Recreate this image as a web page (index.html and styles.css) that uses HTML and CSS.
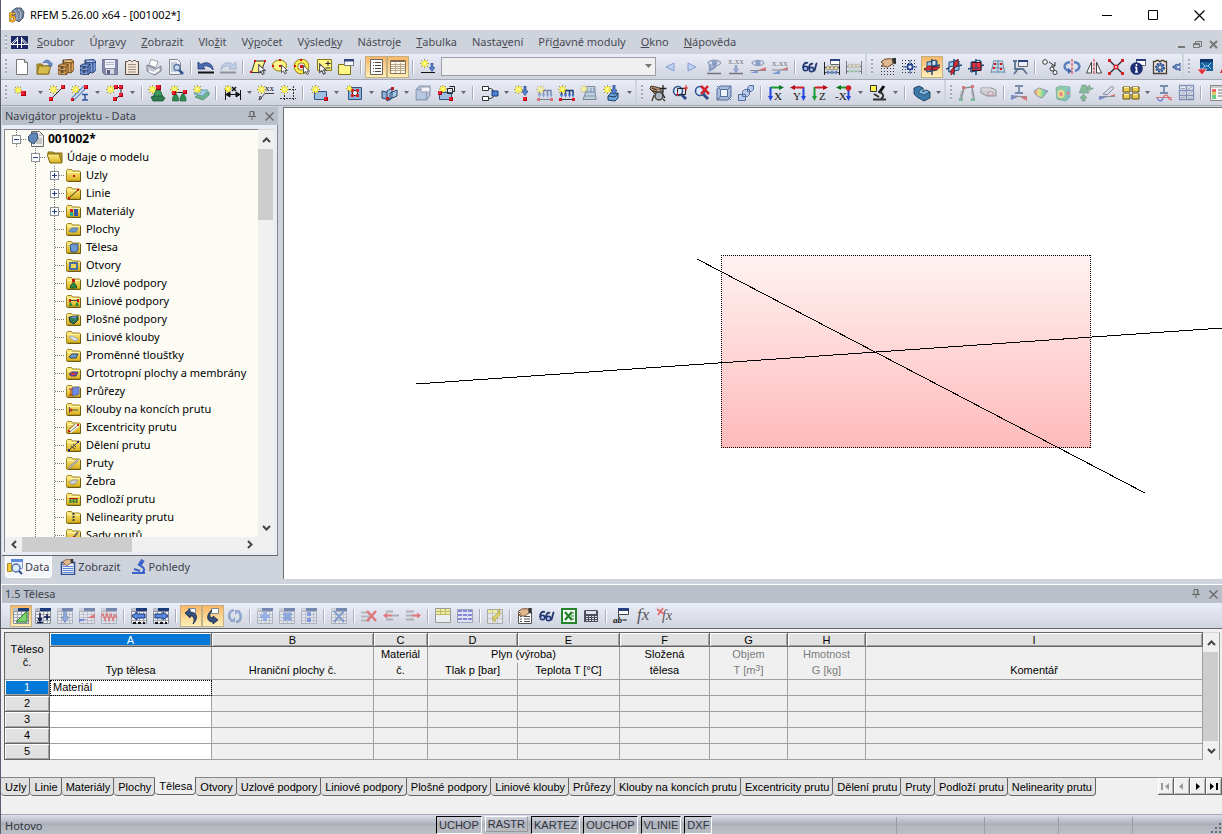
FILE: index.html
```html
<!DOCTYPE html>
<html lang="cs">
<head>
<meta charset="utf-8">
<title>RFEM 5.26.00 x64 - [001002*]</title>
<link rel="stylesheet" href="styles.css">
</head>
<body>
<svg class="defs" aria-hidden="true">
  <defs>
    <linearGradient id="pink" x1="0" y1="0" x2="0" y2="1"><stop offset="0" stop-color="#fff2f2"/><stop offset="1" stop-color="#ffbaba"/></linearGradient>
    <linearGradient id="gold" x1="0" y1="0" x2="0" y2="1"><stop offset="0" stop-color="#fff08a"/><stop offset="1" stop-color="#d8ae18"/></linearGradient>
    <linearGradient id="rain" x1="0" y1="0" x2="1" y2="0"><stop offset="0" stop-color="#e33"/><stop offset=".35" stop-color="#ee3"/><stop offset=".65" stop-color="#3c6"/><stop offset="1" stop-color="#36d"/></linearGradient>
    <symbol id="star" viewBox="0 0 8 8"><path d="M4 0v8M0 4h8M1 1l6 6M7 1L1 7" stroke="#8c7c20" stroke-width=".8"/><path d="M4 1v6M1 4h6M2 2l4 4M6 2L2 6" stroke="#f8ec20" stroke-width="1.300"/><circle cx="4" cy="4" r="1.500" fill="#fffb90"/></symbol>
    <symbol id="node" viewBox="0 0 4 4"><path d="M0 0h4v4H0z" fill="#b00010"/><path d="M0 0h3v3H0z" fill="#f02030"/></symbol>
    <symbol id="folder" viewBox="0 0 15 13"><path d="M.5 2.500v-1l1-1h4l1 1.500h7l1 1v9h-14z" fill="url(#gold)" stroke="#a08420"/><path d="M1.500 3.500h12" stroke="#fff6b0"/><path d="M14.500 3.500v9h-13" fill="none" stroke="#6e5a10"/></symbol>
    <symbol id="grid" viewBox="0 0 16 16"><path d="M.5 3.500h15v12H.5z" fill="#eceef2" stroke="#8a8e98"/><path d="M1 6.500h14M1 9.500h14M1 12.500h14M4.500 4v11M8.500 4v11M12.500 4v11" stroke="#a4a8b2"/><path d="M0 0h16v3H0z" fill="#b9bdc6"/><path d="M5 0h11v3H5z" fill="#1b3a7a"/></symbol>
    <symbol id="cursor" viewBox="0 0 7 10"><path d="M.5.5v7.500l2-1.500 1.500 3 1.500-1-1.500-2.500h2.500z" fill="#fff" stroke="#555"/></symbol>
    <symbol id="down" viewBox="0 0 6 10"><path d="M2 0h2v5h2l-3 4.500L0 5h2z" fill="#5b88dc" stroke="#1c3a7c" stroke-width=".7"/></symbol>
    <symbol id="dots" viewBox="0 0 16 16"><path d="M1 1.500h15M1 4.500h15M1 7.500h15M1 10.500h15M1 13.500h15" stroke="#333" stroke-width="1" stroke-dasharray="1 2"/></symbol>
    <symbol id="glasses" viewBox="0 0 16 16"><path d="M1 9c0-4 2-6 5-5M6 9h2M7 9c0-3 2-5 4-4M12 12c2-2 1-6 3-8" fill="none" stroke="#24386f" stroke-width="1.800"/><circle cx="3.500" cy="9.500" r="2.300" fill="#a9bdec" stroke="#24386f" stroke-width="1.500"/><circle cx="9.500" cy="10.500" r="2.300" fill="#a9bdec" stroke="#24386f" stroke-width="1.500"/></symbol>
    <symbol id="blades" viewBox="0 0 16 16"><path d="M3 3l10-1v9L3 13z" fill="#9cc8ee" stroke="#1d4474"/><path d="M8 0v16M0 10l16-4" stroke="#1d4474" stroke-width="1.500"/><path d="M8 2l4-1v5l-4 1zM3 8l5-1v4l-5 2z" fill="#d6ebfa" stroke="#1d4474"/></symbol>
    <symbol id="frame" viewBox="0 0 16 16"><path d="M1 14.500h14" stroke="#333"/><path d="M2.500 5.500h12M2.500 5v6M6.500 5v6M10.500 5v6M14 5v6" stroke="#1c3a7c" stroke-width="1.500"/><path d="M1 9h3l-1.500 4zM5 9h3l-1.500 4zM9 9h3l-1.500 4zM12.500 9h3L14 13z" fill="#4a78d0"/><path d="M0 13h3v3H0zM13 13h3v3h-3z" fill="#e01828"/></symbol>
    <symbol id="vis" viewBox="0 0 16 8"><path d="M1 4c3-4 11-4 14 0-3 4-11 4-14 0z" fill="#e4ecf8" stroke="#54688c" stroke-width="1.300"/><circle cx="8" cy="4" r="3" fill="#4568a8"/></symbol>
    <symbol id="hand" viewBox="0 0 12 8"><path d="M0 3l3-2 4-.5 3 1v3l-2 1-3 2-2-1H0l2-1.500z" fill="#e0b890" stroke="#6e4524" stroke-width=".8"/><path d="M9 0h3v5l-3-1z" fill="#333"/></symbol>
    <symbol id="lens" viewBox="0 0 16 16"><path d="M9 9l5 5" stroke="#2c4a8c" stroke-width="3"/><circle cx="6" cy="6" r="4.500" fill="#d4e6fa" stroke="#33508c" stroke-width="1.500"/></symbol>
    <symbol id="cube" viewBox="0 0 14 14"><path d="M1 4l3-3h9v8l-3 4H1z" fill="#9db8dc" stroke="#4d6488"/><path d="M1 4h9v9M10 4l3-3" fill="none" stroke="#4d6488"/></symbol>
    <symbol id="caret" viewBox="0 0 5 3"><path d="M0 0h5L2.500 3z" fill="#666"/></symbol>
    <symbol id="pin" viewBox="0 0 8 10"><path d="M2 .5h4v5H2zM5.500 1v4M0 5.500h8M4 6v3" fill="none" stroke="#666"/></symbol>
    <symbol id="cross" viewBox="0 0 9 9"><path d="M.5.5l8 8M8.500.5l-8 8" stroke="#666" stroke-width="1.300"/></symbol>
    <symbol id="cabinet" viewBox="0 0 16 16"><path d="M5 1l9-.5L16 3v8l-3 3-5-1z" stroke-width=".8"/><path d="M0 7l3-2h7v9l-2 2-8-1z" stroke-width=".8"/><path d="M5 1v4M0 7l8 1v8M8 8l2-3M0 11l8 1M13 4v9M13 4l3-1M6 3l7 1" fill="none" stroke-width=".8"/><path d="M2.500 9h3M2.500 13h3" stroke="#333" stroke-width="1.500"/><path d="M6 2l6 .5" stroke="#fff" opacity=".6"/></symbol>
  </defs>
</svg>

<header class="titlebar">
  <svg class="ic" viewBox="0 0 16 16"><path d="M3 4l4-3 5 0 3 4-1 6-4 4-3-2-4-3z" fill="#71849c" stroke="#44566e"/><path d="M5 3l3 4v6M9 2l3 4-1 6M3 5l3 3" fill="none" stroke="#b8c6d6"/><text x="0" y="15" class="five">5</text></svg>
  <h1>RFEM 5.26.00 x64 - [001002*]</h1>
  <div class="winbtns">
    <button aria-label="Minimalizovat"><svg width="11" height="11"><path d="M0 5.500h10" stroke="#000"/></svg></button>
    <button aria-label="Maximalizovat"><svg width="11" height="11"><path d="M.5.5h9v9h-9z" fill="none" stroke="#000"/></svg></button>
    <button aria-label="Zavřít"><svg width="11" height="11"><path d="M.5.5l10 10M10.500.5l-10 10" stroke="#000" stroke-width="1.200"/></svg></button>
  </div>
</header>

<nav class="menubar">
  <span class="grip"></span>
  <svg class="logo" viewBox="0 0 17 13"><path d="M0 0h17v13H0z" fill="#1c2765"/><path d="M0 8.500h17M6.500 1v11M10.500 1v11M6.500 2L0 8M10.500 2l6 6M6 4L2 8M11 4l3 4" stroke="#fff" fill="none"/></svg>
  <div class="menus">
    <button><u>S</u>oubor</button><button>Úpr<u>a</u>vy</button><button><u>Z</u>obrazit</button><button>Vlo<u>ž</u>it</button><button>Vý<u>p</u>očet</button><button>Výsled<u>k</u>y</button><button>Nástro<u>j</u>e</button><button><u>T</u>abulka</button><button>Nasta<u>v</u>ení</button><button>Pří<u>d</u>avné moduly</button><button><u>O</u>kno</button><button><u>N</u>ápověda</button>
  </div>
  <div class="mdi">
    <button aria-label="Minimalizovat okno"><svg width="9" height="9"><path d="M1 7h7" stroke="#777" stroke-width="2"/></svg></button>
    <button aria-label="Obnovit okno"><svg width="9" height="9"><path d="M2.500 3V1.500h6v5H7M.5 3.500h6v4h-6zM.5 4.500h6" fill="none" stroke="#777"/></svg></button>
    <button aria-label="Zavřít okno"><svg width="9" height="9"><path d="M1 1l7 7M8 1L1 8" stroke="#777" stroke-width="2"/></svg></button>
  </div>
</nav>

<div class="toolrow">
  <div class="bar" role="toolbar">
    <span class="grip"></span>
    <button class="tb" aria-label="Nový"><svg viewBox="0 0 16 16"><path d="M2.500.5h8l3 3v12h-11z" fill="#fff" stroke="#777"/><path d="M10.500.5v3h3" fill="#ddd" stroke="#777"/></svg></button>
    <button class="tb" aria-label="Otevřít"><svg viewBox="0 0 16 16"><path d="M1 15V5h5l1 2h6v8z" fill="#b79a30" stroke="#8a7220"/><path d="M1 15l2-8h12l-3 8z" fill="#d8bc4c" stroke="#8a7220"/><path d="M7 4c2-4 6-4 8 0l1 0v3h-4l1-1.500C12 3 9 3 7 4z" fill="#6c8ec8" stroke="#3c5a92" stroke-width=".6"/></svg></button>
    <button class="tb" aria-label="Projekty"><svg viewBox="0 0 16 16"><use href="#cabinet" fill="#d9a45c" stroke="#54330c"/></svg></button>
    <button class="tb" aria-label="Bloky"><svg viewBox="0 0 16 16"><use href="#cabinet" fill="#7f9fe0" stroke="#16295c"/></svg></button>
    <button class="tb" aria-label="Uložit"><svg viewBox="0 0 16 16"><path d="M.5.5h15v15h-13l-2-2z" fill="#8486a8" stroke="#777a98"/><path d="M3 1h10v8H3z" fill="#f0f0f8"/><path d="M4 3.500h8M4 5.500h8" stroke="#b4b6c8"/><path d="M4 10h8v5H4z" fill="#d8d8e2"/><path d="M5 11h3v4H5z" fill="#5c5f84"/></svg></button>
    <button class="tb" aria-label="Protokol"><svg viewBox="0 0 16 16"><path d="M1.500 2.500h2l1-1h2l1 1h1l1-1h2l1 1h2v13h-13z" fill="#f0e6da" stroke="#54483e"/><path d="M4 5.500h8M4 8h8M4 10.500h8M4 13h8" stroke="#a08e80"/></svg></button>
    <button class="tb" aria-label="Tisk"><svg viewBox="0 0 16 16"><path d="M3 6l2-5.500 7 2-2 6z" fill="#fff" stroke="#888" stroke-width=".8"/><path d="M1 6l9 4 5-3v5l-6 4-8-4z" fill="#c4c6d2" stroke="#66687a" stroke-width=".8"/><path d="M3 12l5 2 5-4" fill="none" stroke="#fff" stroke-width="1.800"/></svg></button>
    <button class="tb" aria-label="Náhled"><svg viewBox="0 0 16 16"><path d="M1.500.5h8l3 3v12h-11z" fill="#eef2f8" stroke="#888"/><path d="M3 4h6M3 6h5M3 8h4M3 10h3M3 12h5" stroke="#9ab"/><path d="M11 11l4 4" stroke="#34568e" stroke-width="2.500"/><circle cx="9" cy="8.500" r="3" fill="#c4dcf4" stroke="#5c75a4" stroke-width="1.300"/></svg></button>
    <i class="sep"></i>
    <button class="tb" aria-label="Zpět"><svg viewBox="0 0 16 16"><path d="M0 13.500h16" stroke="#111" stroke-width="2"/><path d="M0 3v7h7L5 7.500C8 6 12 7 15 11c0-7-7-9-12-5.500z" fill="#4a70b8" stroke="#1c3468" stroke-width=".8"/></svg></button>
    <button class="tb dis" aria-label="Znovu"><svg viewBox="0 0 16 16"><path d="M0 13.500h16" stroke="#555" stroke-width="2"/><path d="M16 3v7H9l2-2.500C8 6 4 7 1 11c0-7 7-9 12-5.500z" fill="#a9c1e8" stroke="#6c7fa3" stroke-width=".8"/></svg></button>
    <i class="sep"></i>
    <button class="tb" aria-label="Výběr kosodélníkem"><svg viewBox="0 0 16 16"><path d="M1.500 13.500L5 2h10l-4 11.500z" fill="#fff68a" stroke="#333"/><path d="M4 1h2v2H4zM14 1h2v2h-2zM0 12h2v2H0z" fill="#d11"/><use href="#cursor" x="8" y="5" width="8" height="11"/></svg></button>
    <button class="tb" aria-label="Výběr elipsou"><svg viewBox="0 0 16 16"><ellipse cx="7.500" cy="6.500" rx="7" ry="5.500" fill="#fff68a" stroke="#887a00"/><path d="M7 6h2v2H7zM7 0h2v2H7zM0 6h2v2H0z" fill="#d11"/><use href="#cursor" x="9" y="5" width="7" height="11"/></svg></button>
    <button class="tb" aria-label="Výběr mezikružím"><svg viewBox="0 0 16 16"><circle cx="7.500" cy="7.500" r="5.500" fill="#e4e7f1" stroke="#807000" stroke-width="4.500"/><circle cx="7.500" cy="7.500" r="5.500" fill="none" stroke="#fff050" stroke-width="3"/><path d="M6 6h3v3H6zM6 0h2v2H6zM0 6h2v2H0z" fill="#d11"/><use href="#cursor" x="9" y="6" width="7" height="10"/></svg></button>
    <button class="tb" aria-label="Výběr oknem"><svg viewBox="0 0 16 16"><path d="M1.500.5h14v11h-14z" fill="#fff68a" stroke="#8a7b10"/><path d="M12 2v5M9.500 4.500h5M9.500 9h5" stroke="#222"/><use href="#cursor" x="3" y="4" width="8" height="12"/></svg></button>
    <button class="tb" aria-label="Výběr"><svg viewBox="0 0 16 16"><path d="M.5 5.500h12v10H.5z" fill="#fff68a" stroke="#7d7218"/><path d="M6.500.5h9v6h-9z" fill="#f8f8fc" stroke="#777"/><path d="M6 0h10v2.500H6z" fill="#33457c"/></svg></button>
    <i class="sep"></i>
    <button class="tb on" aria-label="Navigátor" aria-pressed="true"><svg viewBox="0 0 16 16"><path d="M2.500.5h12v15h-12z" fill="#fff" stroke="#666"/><path d="M5 3.500h1M5 6.500h1M5 9.500h1M5 12.500h1M7 3.500h6M7 6.500h6M7 9.500h6M7 12.500h6" stroke="#444"/></svg></button>
    <button class="tb on" aria-label="Tabulka" aria-pressed="true"><svg viewBox="0 0 16 16"><path d="M.5 1.500h15v13H.5z" fill="#fff8e8" stroke="#86745c"/><path d="M1 1h14v2H1z" fill="#80684c"/><path d="M1 5.500h14M1 7.500h14M1 9.500h14M1 11.500h14M5.500 4v10M10.500 4v10" stroke="#b8a68c"/></svg></button>
    <i class="sep"></i>
    <button class="tb" aria-label="Nový zatěžovací stav"><svg viewBox="0 0 16 16"><use href="#star" x="0" y="0" width="9" height="9"/><path d="M1 13.500h14" stroke="#111"/><use href="#down" x="9" y="4" width="6" height="9"/></svg></button>
    <label class="combo"><select aria-label="Zatěžovací stav"><option></option></select><svg class="car" width="7" height="4"><path d="M0 0h7L3.500 4z" fill="#777"/></svg></label>
    <button class="tb dis" aria-label="Předchozí"><svg viewBox="0 0 16 16"><path d="M12 4v8L4 8z" fill="#a9c3f4" stroke="#3f67bb"/></svg></button>
    <button class="tb dis" aria-label="Další"><svg viewBox="0 0 16 16"><path d="M4 4v8l8-4z" fill="#a9c3f4" stroke="#3f67bb"/></svg></button>
    <button class="tb dis" aria-label="Zobrazit zatížení"><svg viewBox="0 0 16 16"><use href="#vis" x="1" y="0" width="15" height="8"/><path d="M4 5v6c3-2 5-2 6-5" stroke="#4a68a8" stroke-width="2.500" fill="none"/><path d="M1 14.500h14" stroke="#222" stroke-width="1.500"/></svg></button>
    <button class="tb dis" aria-label="Hodnoty zatížení"><svg viewBox="0 0 16 16"><text x="0" y="5" class="xx">x.xx</text><use href="#down" x="5" y="6" width="6" height="8"/><path d="M1 14.500h14" stroke="#222" stroke-width="1.500"/></svg></button>
    <button class="tb dis" aria-label="Zobrazit výsledky"><svg viewBox="0 0 16 16"><use href="#vis" x="1" y="0" width="14" height="8"/><path d="M0 14l8-3v3z" fill="#36c"/><path d="M8 11l8-3v3z" fill="#d22"/><path d="M0 11.500h16" stroke="#444"/></svg></button>
    <button class="tb dis" aria-label="Hodnoty výsledků"><svg viewBox="0 0 16 16"><text x="0" y="7" class="xx">x.xx</text><path d="M0 15l8-4v4z" fill="#36c"/><path d="M8 11l8-3v3z" fill="#d22"/><path d="M0 11h16" stroke="#444"/></svg></button>
    <i class="sep"></i>
    <button class="tb" aria-label="Hledat"><svg viewBox="0 0 16 16"><use href="#glasses"/></svg></button>
    <button class="tb" aria-label="Číslování"><svg viewBox="0 0 16 16"><path d="M.5 3v13M15.500 3v13M0 8.500h16M0 13.500h16" stroke="#222"/><circle cx="4" cy="9" r="2" fill="#e8dca0" stroke="#777" stroke-width=".7"/><circle cx="8" cy="9" r="2" fill="#e8dca0" stroke="#777" stroke-width=".7"/><circle cx="12" cy="9" r="2" fill="#e8dca0" stroke="#777" stroke-width=".7"/><circle cx="4" cy="13.500" r="1.800" fill="#6d86bd"/><circle cx="8" cy="13.500" r="1.800" fill="#6d86bd"/><circle cx="12" cy="13.500" r="1.800" fill="#6d86bd"/><path d="M6.500.5h9v5h-9z" fill="#fff" stroke="#666"/><path d="M6 0h10v2H6z" fill="#29407c"/></svg></button>
    <button class="tb dis" aria-label="Přečíslovat"><svg viewBox="0 0 16 16"><path d="M.5 2v13M15.500 2v13M0 7.500h16M0 12.500h16" stroke="#222"/><circle cx="4" cy="7" r="2" fill="#e8dca0" stroke="#777" stroke-width=".7"/><circle cx="8" cy="7" r="2" fill="#e8dca0" stroke="#777" stroke-width=".7"/><circle cx="12" cy="7" r="2" fill="#e8dca0" stroke="#777" stroke-width=".7"/><circle cx="4" cy="12" r="1.800" fill="#8ac09a"/><circle cx="8" cy="12" r="1.800" fill="#8ac09a"/><circle cx="12" cy="12" r="1.800" fill="#8ac09a"/></svg></button>
  </div>
  <div class="bar" role="toolbar">
    <span class="grip"></span>
    <button class="tb" aria-label="Nastavit rastr"><svg viewBox="0 0 16 16"><use href="#dots" y="2"/><use href="#hand" x="1" y="-1" width="15" height="10"/></svg></button>
    <button class="tb" aria-label="Rastr"><svg viewBox="0 0 16 16"><use href="#dots" x="-1"/><path d="M8 1v14M1 8h14M5 5l6 6M11 5l-6 6" stroke="#3058b0"/><circle cx="8" cy="8" r="2.500" fill="#e8ecf8" stroke="#203c88" stroke-width="1.500"/></svg></button>
    <button class="tb on" aria-label="Rovina XY" aria-pressed="true"><svg viewBox="0 0 16 16"><use href="#blades"/><path d="M0 11l4-4h4l-1 4zM8 11l1-3h7l-4 3z" fill="#d8303a" stroke="#701018" stroke-width=".8"/></svg></button>
    <button class="tb" aria-label="Rovina YZ"><svg viewBox="0 0 16 16"><use href="#blades"/><path d="M8 4l4-4v6l-4 3zM5 11l3-3v5l-3 3z" fill="#d8303a" stroke="#701018" stroke-width=".8"/></svg></button>
    <button class="tb" aria-label="Rovina XZ"><svg viewBox="0 0 16 16"><use href="#blades"/><path d="M4 3.500h9v8H4z" fill="#f0303a" stroke="#401018"/><path d="M8 3v9M4 9h9" stroke="#1d4474"/></svg></button>
    <button class="tb" aria-label="Mřížka"><svg viewBox="0 0 16 16"><path d="M4 1h8l3 14H2z" fill="#c8d8e8"/><path d="M4 1l-3 13M8 1v13M12 1l3 13M3 5h10M2 9h12M1 13h14M5 2h6" stroke="#6f8fa8" fill="none"/><path d="M4 4h2v2H4zM10 4h2v2h-2zM3 8h2v2H3zM10 9h2v2h-2z" fill="#d11"/></svg></button>
    <button class="tb" aria-label="Pracovní rovina"><svg viewBox="0 0 16 16"><path d="M3 2v9M1 2h4M2 15l4-5h5l4 5M3 10h7" fill="none" stroke="#5c7490" stroke-width="1.800"/><path d="M6.500 1.500h9v6h-9z" fill="#e8eefb" stroke="#666"/><path d="M6 1h10v2H6z" fill="#29407c"/></svg></button>
    <i class="sep"></i>
    <button class="tb" aria-label="Posunout"><svg viewBox="0 0 16 16"><circle cx="3" cy="3" r="2.300" fill="#fff" stroke="#333"/><circle cx="10" cy="10" r="2" fill="#fff" stroke="#333"/><circle cx="13" cy="13.500" r="2" fill="#fff" stroke="#333"/><path d="M7 3l6 4M13 3v4H9" fill="none" stroke="#333"/></svg></button>
    <button class="tb" aria-label="Otočit"><svg viewBox="0 0 16 16"><path d="M6 3C-1 4-1 10 5 12M10 3c7 1 7 7 1 9" fill="none" stroke="#5c80c0" stroke-width="2.500"/><path d="M4 9l4 3-4 3z" fill="#3c60a8"/><path d="M8 0v16" stroke="#d22" stroke-dasharray="3 1"/></svg></button>
    <button class="tb" aria-label="Zrcadlit"><svg viewBox="0 0 16 16"><path d="M5.500 3v11H.5zM10.500 3v11h5z" fill="#fff" stroke="#444"/><path d="M8 0v16" stroke="#d22" stroke-dasharray="3 1"/></svg></button>
    <button class="tb" aria-label="Spojit"><svg viewBox="0 0 16 16"><path d="M2 2l12 12M14 2L2 14" stroke="#222" stroke-width="1.300"/><path d="M0 0h3v3H0zM13 0h3v3h-3zM0 13h3v3H0zM13 13h3v3h-3z" fill="#d8202a"/><circle cx="8" cy="8" r="2.500" fill="#d8202a"/><circle cx="8" cy="8" r="1" fill="#eee"/></svg></button>
    <button class="tb" aria-label="Informace"><svg viewBox="0 0 16 16"><path d="M6.500.5h9v6h-9z" fill="#fff" stroke="#666"/><path d="M6 0h10v2H6z" fill="#29407c"/><circle cx="6.500" cy="9.500" r="6.300" fill="#1c2f74"/><path d="M6.500 5v2M6.500 8v5M5 8.500h2M5 13h3" stroke="#fff" stroke-width="1.600"/></svg></button>
    <button class="tb" aria-label="Nastavení"><svg viewBox="0 0 16 16"><path d="M1.500 2.500h2l1-1h2l1 1h1l1-1h2l1 1h2v12h-13z" fill="#f0e8dc" stroke="#4a4038" stroke-width="1.300"/><circle cx="8" cy="8.500" r="4" fill="#7c98cc" stroke="#2d4c8c" stroke-width="2" stroke-dasharray="2 1"/><circle cx="8" cy="8.500" r="2" fill="#f0e8dc" stroke="#2d4c8c"/></svg></button>
    <button class="tb half" aria-label="Možnosti"><svg viewBox="0 0 8 16"><path d="M0 7h2l1-2 2 1 2-2v8l-2-2-2 1-1-2H0z" fill="#6c8cc8" stroke="#2d4c8c" stroke-width=".8"/><circle cx="5.500" cy="8" r="1.200" fill="#eef"/></svg></button>
  </div>
  <div class="bar last" role="toolbar">
    <span class="grip"></span>
    <button class="tb" aria-label="Moduly"><svg viewBox="0 0 16 16"><path d="M3 0h13v12H3z" fill="#1d5f9c"/><path d="M3 0h13v3H3z" fill="#10386c"/><path d="M5 4l3 3-3 3M14 4l-3 3 3 3M8 7h3" stroke="#88d0f4" fill="none"/><path d="M0 10h10l-5 6z" fill="#e0343c" stroke="#fff" stroke-width=".6"/></svg></button>
    <button class="tb" aria-label="Modul"><svg viewBox="0 0 16 16"><path d="M1 14l4-8v8z" fill="#d22"/></svg></button>
  </div>
</div>

<div class="toolrow">
  <div class="bar" role="toolbar">
    <span class="grip"></span>
    <button class="split" aria-label="Uzel"><svg viewBox="0 0 16 16"><use href="#star" x="-2" y="1" width="8" height="8"/><use href="#node" x="5" y="6" width="5" height="5"/></svg><svg class="dd"><use href="#caret"/></svg></button>
    <button class="tb" aria-label="Linie"><svg viewBox="0 0 16 16"><path d="M2 14L14 2" stroke="#222"/><use href="#star" x="0" y="0" width="9" height="9"/><use href="#node" x="0" y="12" width="4" height="4"/><use href="#node" x="12" y="0" width="4" height="4"/></svg></button>
    <button class="split" aria-label="Prut"><svg viewBox="0 0 16 16"><path d="M0 14L12 2" stroke="#5d7fb4" stroke-width="4"/><path d="M0 14L12 2" stroke="#c8dcf4" stroke-width="2"/><use href="#node" x="-2" y="13" width="3" height="3"/><use href="#node" x="11" y="0" width="4" height="4"/><use href="#star" x="-2" y="0" width="9" height="9"/><path d="M9 9.500h6M9 15h6M12 9v6" stroke="#2f55a4" stroke-width="1.500"/></svg><svg class="dd"><use href="#caret"/></svg></button>
    <button class="split" aria-label="Lomená linie"><svg viewBox="0 0 16 16"><path d="M6 2.500h7V9l-5 5" fill="none" stroke="#222"/><use href="#star" x="-2" y="0" width="9" height="9"/><use href="#node" x="6" y="0" width="4" height="4"/><use href="#node" x="11" y="0" width="4" height="4"/><use href="#node" x="11" y="8" width="4" height="4"/><use href="#node" x="5" y="12" width="4" height="4"/></svg><svg class="dd"><use href="#caret"/></svg></button>
    <i class="sep"></i>
    <button class="tb" aria-label="Uzlová podpora"><svg viewBox="0 0 16 16"><path d="M7 5h4l3 7H4z" fill="#3a9c5a" stroke="#1c5536" stroke-width=".8"/><path d="M2 12l3-1h8l3 2-2 3H4z" fill="#2c7c4c" stroke="#1c5536" stroke-width=".8"/><use href="#star" x="-1" y="0" width="9" height="9"/><use href="#node" x="7" y="0" width="5" height="5"/></svg></button>
    <button class="tb" aria-label="Liniová podpora"><svg viewBox="0 0 16 16"><path d="M2 7.500h12" stroke="#222"/><path d="M3.500 9h2l2 4v3h-6v-3zM11 9h2l2 4v3H9v-3z" fill="#2f8c50" stroke="#1c5536" stroke-width=".6"/><use href="#star" x="-1" y="0" width="9" height="9"/><use href="#node" x="1" y="6" width="4" height="4"/><use href="#node" x="12" y="5" width="4" height="4"/></svg></button>
    <button class="tb" aria-label="Plošná podpora"><svg viewBox="0 0 16 16"><path d="M2 12l3-2 11-3v3l-6 5z" fill="#6cb48c" stroke="#4a8a6c" stroke-width=".8"/><path d="M1 9l6-4h8l-5 6z" fill="#a4cce4" stroke="#5a96ac" stroke-width=".8"/><use href="#star" x="0" y="0" width="9" height="9"/></svg></button>
    <i class="sep"></i>
    <button class="split" aria-label="Kóta"><svg viewBox="0 0 16 16"><path d="M.5 5v10M15.500 5v10M1 9.500h14M1 9.500l4-2.500v5zM15 9.500l-4-2.500v5z" stroke="#111" fill="#111"/><use href="#star" x="-1" y="0" width="8" height="8"/><path d="M7 2l4 4M11 2L7 6" stroke="#111" stroke-width="1.500"/></svg><svg class="dd"><use href="#caret"/></svg></button>
    <button class="tb" aria-label="Komentář"><svg viewBox="0 0 16 16"><use href="#star" x="-1" y="0" width="9" height="9"/><text x="7" y="6" class="xx">xx</text><path d="M1 15l6-6.500h9M1 15l1-4 2 2z" stroke="#444" fill="none"/></svg></button>
    <button class="tb" aria-label="Vodicí linie"><svg viewBox="0 0 16 16"><path d="M4.500 1v15M13.500 1v15M0 4.500h16M0 13.500h16" stroke="#333" stroke-dasharray="2 1"/><use href="#star" x="0" y="0" width="9" height="9"/></svg></button>
    <i class="sep"></i>
    <button class="split" aria-label="Plocha"><svg viewBox="0 0 16 16"><path d="M2.500 6.500h12v8h-12z" fill="#9cc0e4" stroke="#34547f"/><use href="#star" x="-1" y="0" width="9" height="9"/><use href="#node" x="12" y="12" width="4" height="4"/></svg><svg class="dd"><use href="#caret"/></svg></button>
    <button class="split" aria-label="Otvor"><svg viewBox="0 0 16 16"><path d="M1.500 2.500h13v12h-13z" fill="#8eb1dc" stroke="#34547f"/><path d="M5.500 5.500h5v5h-5z" fill="#eef" stroke="#333"/><path d="M4 4h3v3H4zM9 4h3v3H9zM4 9h3v3H4zM9 9h3v3H9z" fill="#d22"/><path d="M6.500 6.500h3v3h-3z" fill="#eef"/><use href="#star" x="-1" y="0" width="7" height="7"/></svg><svg class="dd"><use href="#caret"/></svg></button>
    <button class="split" aria-label="Průnik"><svg viewBox="0 0 16 16"><path d="M0 6l8 2V15l-8-2z" fill="#8eb1dc" stroke="#2a426c"/><path d="M5 6l5-3v10l-5 3zM8 8l7-3v6l-7 3z" fill="#a8c8e8" stroke="#2a426c"/><path d="M4 12h3v3H4zM9 2h3v3H9z" fill="#b22"/></svg><svg class="dd"><use href="#caret"/></svg></button>
    <button class="tb dis" aria-label="Těleso"><svg viewBox="0 0 16 16"><use href="#cube" x="0" y="0" width="16" height="16"/><path d="M6 2h9v5H6z" fill="#fff" stroke="#667"/></svg></button>
    <button class="split" aria-label="Vysunutí"><svg viewBox="0 0 16 16"><path d="M.5 7.500h12v7H.5z" fill="#9ebce4" stroke="#34547f"/><path d="M8.500 3.500h5v5h-5zM10.500 1.500h5v5h-2" fill="none" stroke="#222"/><use href="#star" x="0" y="0" width="8" height="8"/><use href="#node" x="10" y="12" width="4" height="4"/><use href="#node" x="-1" y="6" width="4" height="4"/></svg><svg class="dd"><use href="#caret"/></svg></button>
    <i class="sep"></i>
    <button class="split" aria-label="Kloub"><svg viewBox="0 0 16 16"><path d="M.5 1.500h6v4h-6zM.5 11.500h6v4h-6z" fill="#fff" stroke="#333"/><path d="M7 3.500c4 0 5 2 5 4M7 13.500c4 0 5-2 5-4M10 5l2 3 2-2M10 11l2-2" fill="none" stroke="#333"/><path d="M10 6h6v5h-6z" fill="#4c85d8" stroke="#1d3d77"/></svg><svg class="dd"><use href="#caret"/></svg></button>
    <button class="tb" aria-label="Uzlové zatížení"><svg viewBox="0 0 16 16"><use href="#star" x="-1" y="0" width="9" height="9"/><use href="#down" x="7" y="1" width="6" height="10"/><use href="#node" x="8" y="12" width="4" height="4"/></svg></button>
    <button class="tb dis" aria-label="Zatížení prutu"><svg viewBox="0 0 16 16"><use href="#frame"/><use href="#star" x="-1" y="0" width="9" height="9"/></svg></button>
    <button class="tb" aria-label="Liniové zatížení"><svg viewBox="0 0 16 16"><use href="#frame"/><use href="#star" x="-1" y="0" width="9" height="9"/></svg></button>
    <button class="tb dis" aria-label="Plošné zatížení"><svg viewBox="0 0 16 16"><path d="M5 1.500h9v5l1 8H2l2-5z" fill="#a8c8dc" stroke="#345"/><path d="M5 7h9M3 11h11" stroke="#456"/><path d="M6 3v5M10 3v5M13 3v5" stroke="#2c4c8c"/><use href="#star" x="-1" y="0" width="8" height="8"/></svg></button>
    <button class="split" aria-label="Zatížení tělesa"><svg viewBox="0 0 16 16"><use href="#star" x="-2" y="0" width="9" height="9"/><path d="M3 11l3-3h7v5l-3 3-7-1z" fill="#6da6d8" stroke="#1d3d67"/><path d="M3 11l7 1 3-4" stroke="#1d3d67" fill="none"/><use href="#down" x="6" y="0" width="6" height="10"/></svg><svg class="dd"><use href="#caret"/></svg></button>
  </div>
  <div class="bar" role="toolbar">
    <span class="grip"></span>
    <button class="tb" aria-label="Posun pohledu"><svg viewBox="0 0 16 16"><path d="M1 1l5 1 4 1 2 4-2 2-5 0-5-5z" fill="#b09078" stroke="#4b3828"/><path d="M2 3l5 2M2 6l5 1M4 10l-2 6M13 14l2 2" stroke="#4b3828" stroke-width="1.300"/><circle cx="9" cy="11" r="4" fill="#aab4bc" stroke="#444" stroke-width="1.500"/><path d="M13 0v8M9.500 3.500h7M12 8l3 5" stroke="#222" stroke-width="1.300"/></svg></button>
    <button class="tb" aria-label="Zvětšit výřez"><svg viewBox="0 0 16 16"><use href="#lens"/><path d="M5.500 3.500h8v6h-8z" fill="none" stroke="#222"/><path d="M14 0v6M11 3h5M5.500 7v4M4 9.500h3" stroke="#d22"/></svg></button>
    <button class="tb" aria-label="Zrušit výběr"><svg viewBox="0 0 16 16"><use href="#lens"/><path d="M7 1l8 8M14 1L7 9" stroke="#d8202a" stroke-width="2.500"/></svg></button>
    <button class="tb" aria-label="Izometrie"><svg viewBox="0 0 16 16"><path d="M1 4l3-3h11v11l-3 3H1z" fill="#a8bcd8" stroke="#54709f"/><path d="M4.500 4.500h7v7h-7z" fill="#eef2fb" stroke="#54709f"/><path d="M1 1l3.500 3.500M15 1l-3.500 3.500M1 15l3.500-3.500M15 15l-3.500-3.500" stroke="#54709f"/></svg></button>
    <button class="tb" aria-label="Perspektiva"><svg viewBox="0 0 16 16"><path d="M9.500 2.500l2-2h4v4l-2 2h-4zM4.500 6.500l2-2h5v5l-2 2h-5zM.5 9.500h7v6h-7z" fill="#b7c9ec" stroke="#54709f"/></svg></button>
    <i class="sep"></i>
    <button class="tb" aria-label="Pohled X"><svg viewBox="0 0 16 16"><path d="M2.500 13V2" stroke="#2244dd" stroke-width="2"/><path d="M3 2.500h11" stroke="#1a9c30" stroke-width="2"/><path d="M11 0l5 2.500L11 5z" fill="#127a24"/><path d="M0 11h5l-2.500 5z" fill="#2244dd"/><text x="6" y="15" class="ax">X</text></svg></button>
    <button class="tb" aria-label="Pohled Y"><svg viewBox="0 0 16 16"><path d="M13.500 13V2" stroke="#2244dd" stroke-width="2"/><path d="M14 2.500H3" stroke="#d4202a" stroke-width="2"/><path d="M5 0L0 2.500 5 5z" fill="#b01018"/><path d="M11 11h5l-2.500 5z" fill="#2244dd"/><text x="3" y="15" class="ax">Y</text></svg></button>
    <button class="tb" aria-label="Pohled Z"><svg viewBox="0 0 16 16"><path d="M2.500 13V2" stroke="#1a9c30" stroke-width="2"/><path d="M3 2.500h11" stroke="#d4202a" stroke-width="2"/><path d="M11 0l5 2.500L11 5z" fill="#b01018"/><path d="M0 11h5l-2.500 5z" fill="#1a9c30"/><text x="7" y="15" class="ax">Z</text></svg></button>
    <button class="split" aria-label="Pohled -X"><svg viewBox="0 0 16 16"><path d="M12.500 13V2" stroke="#2244dd" stroke-width="2"/><path d="M13 2.500H3" stroke="#1a9c30" stroke-width="2"/><path d="M5 0L0 2.500 5 5z" fill="#127a24"/><circle cx="12.500" cy="3" r="2.800" fill="#d4202a"/><path d="M10 11h5l-2.500 5z" fill="#2244dd"/><text x="-1" y="15" class="ax">-X</text></svg><svg class="dd"><use href="#caret"/></svg></button>
    <button class="split" aria-label="Průhlednost"><svg viewBox="0 0 16 16"><path d="M-.5.5h6v6h-6z" fill="#fff650" stroke="#333"/><path d="M13 1L8 8" stroke="#111" stroke-width="3"/><path d="M9 7c4 2 4 5 1 7M3 9l5 3M2 14.500h13" stroke="#333" stroke-width="2" fill="none"/></svg><svg class="dd"><use href="#caret"/></svg></button>
    <i class="sep"></i>
    <button class="split" aria-label="Vykreslení"><svg viewBox="0 0 16 16"><path d="M0 3l5-2 4 2v4l3-2 4 2v6l-6 3-7-4-3-3z" fill="#3c78a8" stroke="#122c4c" stroke-width=".8"/><path d="M5 6l4-3v4l3-2 4 2-6 3-5-2z" fill="#7cb4dc" stroke="#122c4c" stroke-width=".6"/></svg><svg class="dd"><use href="#caret"/></svg></button>
  </div>
  <div class="bar last" role="toolbar">
    <span class="grip"></span>
    <button class="tb dis" aria-label="Deformace"><svg viewBox="0 0 16 16"><path d="M2 14L5 3l8-1 2 12" fill="none" stroke="#444" stroke-width="1.500"/><path d="M5 3c-4 4-4 7-3 11M13 3c-1 3 0 7 2 11" stroke="#888" fill="none"/><path d="M3 1h3v3H3zM12 0h3v3h-3z" fill="#c22"/><path d="M0 13h4v3H0zM12 13h4v3h-4z" fill="#396"/></svg></button>
    <button class="tb dis" aria-label="Barvy"><svg viewBox="0 0 16 16"><path d="M0 3h10l5 2v6H6L0 8z" fill="#c0c0c0" stroke="#555"/><path d="M0 4h9l5 2" stroke="#eee" fill="none"/><path d="M7 7h5v3H7z" fill="#eee" stroke="#a55"/></svg></button>
    <i class="sep"></i>
    <button class="tb dis" aria-label="Vnitřní síly"><svg viewBox="0 0 16 16"><path d="M4 1h8M4 8h8M8 1v7" stroke="#247" stroke-width="1.800"/><path d="M0 15v-5l9 1z" fill="#24c"/><path d="M9 12h7v4z" fill="#d22"/><path d="M0 11.500h16" stroke="#555"/></svg></button>
    <button class="tb dis" aria-label="Napětí ploch"><svg viewBox="0 0 16 16"><path d="M1 6l5-3 9 3-6 7c-4-1-7-3-8-7z" fill="url(#rain)" stroke="#557"/></svg></button>
    <button class="tb dis" aria-label="Napětí těles"><svg viewBox="0 0 16 16"><path d="M1 3l4-2 10 1v10l-4 4-9-2z" fill="#4cb86c" stroke="#276" stroke-width=".8"/><path d="M11 5l4-3v10l-4 4z" fill="#3aa0b0"/><ellipse cx="6" cy="9" rx="3.500" ry="4" fill="#f4e440"/><ellipse cx="6" cy="9" rx="1.700" ry="2.200" fill="#e33"/><circle cx="13" cy="8" r="1.500" fill="#e33"/></svg></button>
    <button class="tb dis" aria-label="Reakce"><svg viewBox="0 0 16 16"><path d="M5 0h4l2 6 1 2H2l1-2zM5 16v-3H3l3.500-4 3.500 4H8v3zM16 3h-3V0L9 3l4 3V4h3z" fill="#3a9c5a" stroke="#1c5536" stroke-width=".6"/></svg></button>
    <button class="tb dis" aria-label="Řezy"><svg viewBox="0 0 16 16"><path d="M4 9l9-8 2 2-7 7z" fill="#dde" stroke="#345"/><path d="M0 15v-3h8z" fill="#24c"/><path d="M8 12l8-3v3z" fill="#d22"/><path d="M0 11.500h16" stroke="#555"/></svg></button>
    <button class="split" aria-label="Okna výsledků"><svg viewBox="0 0 16 16"><path d="M0 2h7v5H0zM9 2h7v5H9zM0 9h7v5H0zM9 9h7v5H9z" fill="#e8cc50" stroke="#5c4a0c"/><path d="M1 2.500h5M10 2.500h5M1 9.500h5M10 9.500h5" stroke="#fff6b0"/></svg><svg class="dd"><use href="#caret"/></svg></button>
    <button class="tb dis" aria-label="Průběhy"><svg viewBox="0 0 16 16"><path d="M4 1h8M4 8h8M8 1v7" stroke="#247" stroke-width="1.800"/><path d="M0 12.500h16" stroke="#d22"/><path d="M1 13c2 4 5 4 6 0" stroke="#24c" fill="none" stroke-width="1.500"/><path d="M7 13c2-4 5-4 6 1l3 1" stroke="#d22" fill="none" stroke-width="1.500"/></svg></button>
    <button class="tb dis" aria-label="Tabulka výsledků"><svg viewBox="0 0 16 16"><path d="M1.500.5h14v14h-14zM8.500 1v14M1 5.500h14M1 10.500h14" fill="#e8eef8" stroke="#35508a" stroke-width="1.300"/><path d="M3 3.500h4M10 4l4-2M3 8h4M10 8.500l4-1M3 13l4-1M10 13h4" stroke="#777"/></svg></button>
    <i class="sep"></i>
    <button class="tb" aria-label="Panel"><svg viewBox="0 0 16 16"><path d="M2.500.5h13v15h-13z" fill="#f4f4f6" stroke="#888"/><path d="M3 1h12v2H3z" fill="#ccc"/><path d="M4 4h4v3H4z" fill="#e66"/><path d="M4 7h4v3H4z" fill="#dc6"/><path d="M4 10h4v4H4z" fill="#6c8"/><path d="M10 5h4M10 8h4M10 11h4" stroke="#777"/></svg></button>
  </div>
</div>

<main class="work">
  <aside class="dock">
    <div class="cap"><h2>Navigátor projektu - Data</h2><button aria-label="Připnout"><svg width="8" height="10"><use href="#pin"/></svg></button><button aria-label="Zavřít panel"><svg width="9" height="9"><use href="#cross"/></svg></button></div>
    <div class="treebox">
      <ul class="tree">
        <li><button class="exp" aria-label="Sbalit"></button><svg class="ic" viewBox="0 0 16 16"><path d="M3.500.5h8l4 4v11h-12z" fill="#f2f2f2" stroke="#666"/><path d="M8 8h6M8 10h6M8 12h6M11 4h4" stroke="#999"/><path d="M0 6l4-4h5l1 5-4 6-5-3z" fill="#6187b8" stroke="#33496c"/></svg><b>001002*</b></li>
        <li><i></i><button class="exp" aria-label="Sbalit"></button><svg class="ic" viewBox="0 0 16 16"><path d="M1 3h5l1 1h8v9H3z" fill="#c9a726" stroke="#7e6a18"/><path d="M0 5h12l3 9H3z" fill="url(#gold)" stroke="#7e6a18"/></svg>Údaje o modelu</li>
        <li><i></i><i class="v"></i><button class="exp plus" aria-label="Rozbalit"></button><svg class="ic" viewBox="0 0 16 16"><use href="#folder" y="2" width="15" height="13"/><path d="M7 8h2v2H7z" fill="#c11"/></svg>Uzly</li>
        <li><i></i><i class="v"></i><button class="exp plus" aria-label="Rozbalit"></button><svg class="ic" viewBox="0 0 16 16"><use href="#folder" y="2" width="15" height="13"/><path d="M3 13l9-8" stroke="#333"/><path d="M2 12h2v2H2zM11 4h2v2h-2z" fill="#c11"/></svg>Linie</li>
        <li><i></i><i class="v"></i><button class="exp plus" aria-label="Rozbalit"></button><svg class="ic" viewBox="0 0 16 16"><use href="#folder" y="2" width="15" height="13"/><path d="M4 6h3v3H4z" fill="#c22"/><path d="M4 9h3v4H4z" fill="#2a8"/><path d="M8 6h4v7H8z" fill="#35a"/></svg>Materiály</li>
        <li><i></i><i class="v"></i><i class="t"></i><svg class="ic" viewBox="0 0 16 16"><use href="#folder" y="2" width="15" height="13"/><path d="M3 10l3-3h6l-2 4H5z" fill="#6d98d4" stroke="#5a7ca8"/></svg>Plochy</li>
        <li><i></i><i class="v"></i><i class="t"></i><svg class="ic" viewBox="0 0 16 16"><use href="#folder" y="2" width="15" height="13"/><path d="M4 6l2-1h6v6l-2 2H5z" fill="#6d98d4" stroke="#34547f"/></svg>Tělesa</li>
        <li><i></i><i class="v"></i><i class="t"></i><svg class="ic" viewBox="0 0 16 16"><use href="#folder" y="2" width="15" height="13"/><path d="M4 6h7v6H4z" fill="#f2d456" stroke="#47709f" stroke-width="2"/></svg>Otvory</li>
        <li><i></i><i class="v"></i><i class="t"></i><svg class="ic" viewBox="0 0 16 16"><use href="#folder" y="2" width="15" height="13"/><path d="M7.500 7l3 4v2h-6v-2z" fill="#2f8c3e" stroke="#1c5526"/><path d="M6 4h3v3H6z" fill="#c11"/></svg>Uzlové podpory</li>
        <li><i></i><i class="v"></i><i class="t"></i><svg class="ic" viewBox="0 0 16 16"><use href="#folder" y="2" width="15" height="13"/><path d="M4 7.500h8" stroke="#444"/><path d="M3 6h2v3H3zM11 6h2v3h-2z" fill="#c11"/><path d="M4 8l3 5H3zM11 8l2 5H9z" fill="#2f8c3e"/></svg>Liniové podpory</li>
        <li><i></i><i class="v"></i><i class="t"></i><svg class="ic" viewBox="0 0 16 16"><use href="#folder" y="2" width="15" height="13"/><path d="M3 6l9-1v4l-4 4-4-2z" fill="#2f7c4e" stroke="#234"/><path d="M4 6l7-1-2 3z" fill="#6d98d4"/></svg>Plošné podpory</li>
        <li><i></i><i class="v"></i><i class="t"></i><svg class="ic" viewBox="0 0 16 16"><use href="#folder" y="2" width="15" height="13"/><path d="M3 8l3-1 6 3-2 2-3-1z" fill="#dde3ee" stroke="#aab"/></svg>Liniové klouby</li>
        <li><i></i><i class="v"></i><i class="t"></i><svg class="ic" viewBox="0 0 16 16"><use href="#folder" y="2" width="15" height="13"/><path d="M3 10l3-3h6l-2 4H5z" fill="#6d98d4" stroke="#346"/></svg>Proměnné tloušťky</li>
        <li><i></i><i class="v"></i><i class="t"></i><svg class="ic" viewBox="0 0 16 16"><use href="#folder" y="2" width="15" height="13"/><path d="M3 9l3-2h6l-2 4H5z" fill="#55a" stroke="#547"/><path d="M5 9h4" stroke="#d33" stroke-width="2"/></svg>Ortotropní plochy a membrány</li>
        <li><i></i><i class="v"></i><i class="t"></i><svg class="ic" viewBox="0 0 16 16"><use href="#folder" y="2" width="15" height="13"/><path d="M6 5l7-1v7l-6 2z" fill="#6d8ae0" stroke="#5474af"/><path d="M3 6h4M3 12h4M5 6v6" stroke="#a22"/></svg>Průřezy</li>
        <li><i></i><i class="v"></i><i class="t"></i><svg class="ic" viewBox="0 0 16 16"><use href="#folder" y="2" width="15" height="13"/><path d="M3.500 6v6M5 9h7" stroke="#555"/><circle cx="5" cy="9" r="1.500" fill="#c22"/></svg>Klouby na koncích prutu</li>
        <li><i></i><i class="v"></i><i class="t"></i><svg class="ic" viewBox="0 0 16 16"><use href="#folder" y="2" width="15" height="13"/><path d="M4 13l8-7" stroke="#fff" stroke-width="3"/><path d="M4 13l8-7M3 10l6-5" stroke="#777"/><path d="M2 11h2v2H2zM11 5h2v2h-2z" fill="#c22"/></svg>Excentricity prutu</li>
        <li><i></i><i class="v"></i><i class="t"></i><svg class="ic" viewBox="0 0 16 16"><use href="#folder" y="2" width="15" height="13"/><path d="M3 13l9-8M5 9l4 3M7 7l3 3" stroke="#444"/><path d="M2 12h2v2H2zM11 4h2v2h-2z" fill="#227"/></svg>Dělení prutu</li>
        <li><i></i><i class="v"></i><i class="t"></i><svg class="ic" viewBox="0 0 16 16"><use href="#folder" y="2" width="15" height="13"/><path d="M3 13l9-8" stroke="#777" stroke-width="2"/><path d="M3 13l9-8" stroke="#dde"/></svg>Pruty</li>
        <li><i></i><i class="v"></i><i class="t"></i><svg class="ic" viewBox="0 0 16 16"><use href="#folder" y="2" width="15" height="13"/><path d="M3 9l4-2h5l-3 4H5z" fill="#d8d8d0" stroke="#999"/></svg>Žebra</li>
        <li><i></i><i class="v"></i><i class="t"></i><svg class="ic" viewBox="0 0 16 16"><use href="#folder" y="2" width="15" height="13"/><path d="M3 7.500h9" stroke="#c11"/><path d="M4.500 8v4M7.500 8v4M10.500 8v4" stroke="#2f7c3e" stroke-width="2"/></svg>Podloží prutu</li>
        <li><i></i><i class="v"></i><i class="t"></i><svg class="ic" viewBox="0 0 16 16"><use href="#folder" y="2" width="15" height="13"/><path d="M7.500 4v9" stroke="#444" stroke-width="2" stroke-dasharray="2 1"/></svg>Nelinearity prutu</li>
        <li><i></i><i class="v"></i><i class="t"></i><svg class="ic" viewBox="0 0 16 16"><use href="#folder" y="2" width="15" height="13"/><path d="M3 13l5-3 4-5" stroke="#666" fill="none" stroke-width="2"/><path d="M7 9h2v2H7z" fill="#c22"/></svg>Sady prutů</li>
      </ul>
      <div class="vsb"><button aria-label="Nahoru"><svg width="9" height="6"><path d="M1 5l3.500-3.500L8 5" fill="none" stroke="#444" stroke-width="2"/></svg></button><span class="thumb"></span><button class="end" aria-label="Dolů"><svg width="9" height="6"><path d="M1 1l3.500 3.500L8 1" fill="none" stroke="#444" stroke-width="2"/></svg></button></div>
      <div class="hsb"><button aria-label="Vlevo"><svg width="6" height="9"><path d="M5 1L1.500 4.500 5 8" fill="none" stroke="#444" stroke-width="2"/></svg></button><span class="thumb"></span><button class="end" aria-label="Vpravo"><svg width="6" height="9"><path d="M1 1l3.500 3.500L1 8" fill="none" stroke="#444" stroke-width="2"/></svg></button></div>
    </div>
    <div class="docktabs">
      <button class="cur"><svg class="ic" viewBox="0 0 16 16"><path d="M4.500.5h11v9h-11z" fill="#e8f0fc" stroke="#7d9cd0"/><path d="M4 0h12v3H4z" fill="#5c8ae0"/><path d="M.5 4.500h3l1 1v7h-4z" fill="#f2cc3c" stroke="#a88a1c"/><circle cx="9" cy="9" r="4" fill="#dcecfb" stroke="#5773ac" stroke-width="1.500"/><path d="M12 12l3 3" stroke="#2c4a8c" stroke-width="2"/></svg>Data</button>
      <button><svg class="ic" viewBox="0 0 16 16"><path d="M1.500 3.500h13v12h-13z" fill="#eef3fc" stroke="#2c4d94" stroke-width="1.500"/><path d="M3 7.500h10M3 9.500h10M3 11.500h10M3 13.500h10" stroke="#5c84d4"/><use href="#hand" x="1" y="0" width="14" height="7"/></svg>Zobrazit</button>
      <button><svg class="ic" viewBox="0 0 16 16"><path d="M12 1L8 7" stroke="#3c62c8" stroke-width="4"/><path d="M10 7c4 2 4 5 1 7M1 14h13M3 10l6 2" fill="none" stroke="#3c62c8" stroke-width="2"/></svg>Pohledy</button>
    </div>
  </aside>
  <section class="canvas" aria-label="Model">
    <svg width="100%" height="100%" shape-rendering="crispEdges">
      <rect x="437" y="147" width="370" height="193" fill="url(#pink)"/>
      <path d="M437 147.500h370M437 339.500h370M437.500 147v193M806.500 147v193" stroke="#000" stroke-dasharray="1 1"/>
      <path d="M132 276L938 220M413 151L861 385" stroke="#000"/>
    </svg>
  </section>
</main>

<section class="bottom">
  <div class="cap"><h2>1.5 Tělesa</h2><button aria-label="Připnout"><svg width="8" height="10"><use href="#pin"/></svg></button><button aria-label="Zavřít panel"><svg width="9" height="9"><use href="#cross"/></svg></button></div>
  <div class="tabletools" role="toolbar">
    <button class="tb on" aria-label="Zobrazit grafiku"><svg viewBox="0 0 16 16"><use href="#grid"/><path d="M3 14L14 3v11z" fill="#7ed46c" stroke="#2a7c28"/></svg></button>
    <button class="tb" aria-label="Vložit řádek"><svg viewBox="0 0 16 16"><use href="#grid"/><path d="M5 5v7M3 10l2 3 2-3M2 14.500h6M9 9h6M12 6v6" stroke="#111c50" stroke-width="1.500" fill="none"/></svg></button>
    <button class="tb dis" aria-label="Posun dolů"><svg viewBox="0 0 16 16"><use href="#grid"/><use href="#down" x="4" y="3" width="8" height="12"/></svg></button>
    <button class="tb dis" aria-label="Průběh"><svg viewBox="0 0 16 16"><use href="#grid"/><path d="M0 14v-3h8z" fill="#24c"/><path d="M8 10l8-4v4z" fill="#d22"/></svg></button>
    <button class="tb dis" aria-label="Diagram"><svg viewBox="0 0 16 16"><use href="#grid"/><path d="M0 9l2-3 2 6 2-7 2 7 2-6 2 6 2-5 2 3" fill="none" stroke="#d22" stroke-width="1.300"/></svg></button>
    <i class="sep"></i>
    <button class="tb" aria-label="Předchozí tabulka"><svg viewBox="0 0 16 16"><use href="#grid"/><path d="M1 8l5-4v2h8v4H6v2z" fill="#5b88e0" stroke="#1c3a7c"/><path d="M2 15h12" stroke="#111" stroke-dasharray="3 2" stroke-width="2"/></svg></button>
    <button class="tb" aria-label="Další tabulka"><svg viewBox="0 0 16 16"><use href="#grid"/><path d="M15 8l-5-4v2H2v4h8v2z" fill="#5b88e0" stroke="#1c3a7c"/><path d="M2 15h12" stroke="#111" stroke-dasharray="3 2" stroke-width="2"/></svg></button>
    <i class="sep"></i>
    <button class="tb on" aria-label="Synchronizace výběru" aria-pressed="true"><svg viewBox="0 0 16 16"><path d="M5.500.5h7v5h-7z" fill="#fff" stroke="#789"/><path d="M2 5l5-4v3c7 0 9 6 3 12 2-5 1-8-3-8v2z" fill="#34507c" stroke="#14244c" stroke-width=".8"/></svg></button>
    <button class="tb on" aria-label="Přenos výběru" aria-pressed="true"><svg viewBox="0 0 16 16"><path d="M6.500.5h7v5h-7z" fill="#fff" stroke="#789"/><path d="M7 2c-3 4-3 8 1 8V8l5 4-5 4v-2C1 14 1 6 7 2z" fill="#34507c" stroke="#14244c" stroke-width=".8"/></svg></button>
    <button class="tb dis" aria-label="Obnovit"><svg viewBox="0 0 16 16"><path d="M7 2C1 3 1 10 5 13M9 14c6-1 6-8 2-11" fill="none" stroke="#5878b4" stroke-width="2.500"/><path d="M3 14h5V9zM13 2H8v5z" fill="#5878b4"/></svg></button>
    <i class="sep"></i>
    <button class="tb dis" aria-label="Přidat"><svg viewBox="0 0 16 16"><use href="#grid"/><path d="M6 4h4v3h3v3h-3v3H6v-3H3V7h3z" fill="#5b88e0"/></svg></button>
    <button class="tb dis" aria-label="Násobit"><svg viewBox="0 0 16 16"><use href="#grid"/><path d="M5 5l7 7M12 5l-7 7" stroke="#4c78d8" stroke-width="4"/></svg></button>
    <button class="tb dis" aria-label="Dělit"><svg viewBox="0 0 16 16"><use href="#grid"/><path d="M6 4h4v4H6zM6 10h4v4H6z" fill="#3b68d0"/></svg></button>
    <i class="sep"></i>
    <button class="tb dis" aria-label="Vymazat"><svg viewBox="0 0 16 16"><use href="#grid"/><path d="M3 3l10 11M13 3L3 14" stroke="#3c68b8" stroke-width="2"/></svg></button>
    <i class="sep"></i>
    <button class="tb dis" aria-label="Smazat řádek"><svg viewBox="0 0 16 16"><path d="M0 4.500h9M0 8.500h9M0 12.500h9" stroke="#999" stroke-width="2"/><path d="M6 3l9 10M15 3L6 13" stroke="#d22" stroke-width="2.500"/></svg></button>
    <button class="tb dis" aria-label="Vyjmout řádek"><svg viewBox="0 0 16 16"><path d="M3 3.500h7M9 7.500h7M3 11.500h7" stroke="#888" stroke-width="2"/><path d="M0 7.500l4-3v2h5v2H4v2z" fill="#d22"/></svg></button>
    <button class="tb dis" aria-label="Vložit řádek za"><svg viewBox="0 0 16 16"><path d="M1 3.500h8M1 7.500h7M1 11.500h8" stroke="#888" stroke-width="2"/><path d="M16 7.500l-4-3v2H7v2h5v2z" fill="#d22"/></svg></button>
    <i class="sep"></i>
    <button class="tb" aria-label="Zvýraznit"><svg viewBox="0 0 16 16"><path d="M.5.5h15v14H.5z" fill="#eceef0" stroke="#9a9a9a"/><path d="M1 1h14v5H1z" fill="#eeeca0"/><path d="M1 3.500h14M5.500 1v5M10.500 1v5M1 6.500h14" stroke="#bdb96a"/></svg></button>
    <button class="tb" aria-label="Barevné řádky"><svg viewBox="0 0 16 16"><path d="M.5 1.500h15v13H.5z" fill="#e4e5f4" stroke="#a0a2b8"/><path d="M1 3h14M1 7h14M1 11h14" stroke="#8587d8" stroke-width="2"/><path d="M5.500 2v12M10.500 2v12" stroke="#d8daf0"/></svg></button>
    <i class="sep"></i>
    <button class="tb" aria-label="Poznámka"><svg viewBox="0 0 16 16"><path d="M.5 1.500h15v14H.5z" fill="#e4e6ea" stroke="#aaa"/><path d="M1 2h9v3H1z" fill="#eeeca0"/><path d="M5.500 2v13M10.500 2v13M1 5.500h14M1 10.500h14" stroke="#c4c4c4"/><path d="M12 1c3 6-1 8-4 10v3l-3-4 4-3c2-2 3-3 3-6z" fill="#e4d46c" stroke="#b09c2c" stroke-width=".8"/></svg></button>
    <i class="sep"></i>
    <button class="tb" aria-label="Vlastnosti"><svg viewBox="0 0 16 16"><path d="M1.500 4.500h13v11h-13z" fill="#fff" stroke="#555"/><path d="M3 8.500h2M3 11h2M3 13.500h2M7 8.500h6M7 11h6M7 13.500h6" stroke="#555"/><use href="#hand" x="0" y="0" width="16" height="9"/></svg></button>
    <button class="tb" aria-label="Najít"><svg viewBox="0 0 16 16"><use href="#glasses"/></svg></button>
    <button class="tb" aria-label="Excel"><svg viewBox="0 0 16 16"><path d="M1 1h14v14H1z" fill="#f4fbf4" stroke="#24832c" stroke-width="2"/><path d="M4 4l7 8M11 4l-7 8" stroke="#24832c" stroke-width="2.300"/><path d="M9 5h4M10 8h3M9 11h4" stroke="#24832c"/></svg></button>
    <button class="tb" aria-label="Kalkulačka"><svg viewBox="0 0 16 16"><path d="M1 3l1-1h12l1 1v11H1z" fill="#4b4f58"/><path d="M3 3h10v3H3z" fill="#dfe5ea"/><path d="M3 8.500h11M3 10.500h11M3 12.500h11" stroke="#e0e2e8" stroke-dasharray="2 1"/></svg></button>
    <i class="sep"></i>
    <button class="tb" aria-label="Parametry"><svg viewBox="0 0 16 16"><path d="M5.500.5h10v6h-10z" fill="#fff" stroke="#444"/><path d="M5 0h11v3H5z" fill="#29407c"/><path d="M5.500 7v2" stroke="#333"/><text x="0" y="15" class="ab">ab=</text></svg></button>
    <button class="tb" aria-label="Funkce"><svg viewBox="0 0 16 16"><text x="2" y="12" class="fx">fx</text></svg></button>
    <button class="tb" aria-label="Smazat funkce"><svg viewBox="0 0 16 16"><text x="5" y="12" class="fx sm">fx</text><path d="M0 1l7 5M6 0L1 7" stroke="#e06c6c" stroke-width="1.800"/></svg></button>
  </div>
  <div class="sheet">
    <table>
      <colgroup><col class="w46"><col class="w162"><col class="w162"><col class="w54"><col class="w90"><col class="w102"><col class="w90"><col class="w78"><col class="w78"><col></colgroup>
      <thead>
        <tr class="letters"><th rowspan="3" class="corner">Těleso<br>č.</th><th class="sel">A</th><th>B</th><th>C</th><th>D</th><th>E</th><th>F</th><th>G</th><th>H</th><th>I</th></tr>
        <tr class="h1"><th></th><th></th><th>Materiál</th><th colspan="2">Plyn (výroba)</th><th>Složená</th><th class="ro">Objem</th><th class="ro">Hmotnost</th><th></th></tr>
        <tr class="h2"><th>Typ tělesa</th><th>Hraniční plochy č.</th><th>č.</th><th>Tlak p [bar]</th><th>Teplota T [°C]</th><th>tělesa</th><th class="ro">T [m<sup>3</sup>]</th><th class="ro">G [kg]</th><th>Komentář</th></tr>
      </thead>
      <tbody>
        <tr><th class="sel">1</th><td class="focus">Materiál</td><td></td><td></td><td></td><td></td><td></td><td></td><td></td><td></td></tr>
        <tr><th>2</th><td></td><td></td><td></td><td></td><td></td><td></td><td></td><td></td><td></td></tr>
        <tr><th>3</th><td></td><td></td><td></td><td></td><td></td><td></td><td></td><td></td><td></td></tr>
        <tr><th>4</th><td></td><td></td><td></td><td></td><td></td><td></td><td></td><td></td><td></td></tr>
        <tr><th>5</th><td></td><td></td><td></td><td></td><td></td><td></td><td></td><td></td><td></td></tr>
      </tbody>
    </table>
    <div class="vsb"><button aria-label="Nahoru"><svg width="9" height="6"><path d="M1 5l3.500-3.500L8 5" fill="none" stroke="#444" stroke-width="2"/></svg></button><span class="thumb fill"></span><button class="end" aria-label="Dolů"><svg width="9" height="6"><path d="M1 1l3.500 3.500L8 1" fill="none" stroke="#444" stroke-width="2"/></svg></button></div>
  </div>
  <div class="tabs">
    <button>Uzly</button><button>Linie</button><button>Materiály</button><button>Plochy</button><button class="cur">Tělesa</button><button>Otvory</button><button>Uzlové podpory</button><button>Liniové podpory</button><button>Plošné podpory</button><button>Liniové klouby</button><button>Průřezy</button><button>Klouby na koncích prutu</button><button>Excentricity prutu</button><button>Dělení prutu</button><button>Pruty</button><button>Podloží prutu</button><button>Nelinearity prutu</button>
    <div class="tabnav">
      <button aria-label="První"><svg width="9" height="7"><path d="M0 0h2v7H0zM8 0v7L4 3.500z" fill="#999"/></svg></button>
      <button aria-label="Předchozí"><svg width="9" height="7"><path d="M6 0v7L2 3.500z" fill="#999"/></svg></button>
      <button aria-label="Další"><svg width="9" height="7"><path d="M3 0v7l4-3.500z" fill="#000"/></svg></button>
      <button aria-label="Poslední"><svg width="9" height="7"><path d="M7 0h2v7H7zM1 0v7l4-3.500z" fill="#000"/></svg></button>
    </div>
  </div>
</section>

<footer class="status">
  <span class="msg">Hotovo</span>
  <div class="modes"><button>UCHOP</button><button class="off">RASTR</button><button>KARTEZ</button><button>OUCHOP</button><button>VLINIE</button><button>DXF</button></div>
  <div class="panes"><span></span><span></span><span></span><span></span></div>
  <svg class="size" width="12" height="12"><path d="M9 1h2v2H9zM5 5h2v2H5zM9 5h2v2H9zM1 9h2v2H1zM5 9h2v2H5zM9 9h2v2H9z" fill="#666c78"/></svg>
</footer>
</body>
</html>
```
FILE: styles.css
```css
* { box-sizing: border-box; }
html, body { margin: 0; height: 100%; }
body {
  display: flex;
  flex-direction: column;
  overflow: hidden;
  background: #cfd3dc;
  border-left: 1px solid #5a5e6c;
  font: 11px/16px "Noto Sans", "Open Sans", sans-serif;
  color: #000;
}
button {
  margin: 0;
  padding: 0;
  border: 0;
  background: none;
  font: inherit;
  color: inherit;
  display: flex;
  align-items: center;
  justify-content: center;
  white-space: nowrap;
}
svg { display: block; flex: none; }
h1, h2 { margin: 0; font-size: inherit; font-weight: 400; }
.defs { position: absolute; width: 0; height: 0; }
.ic { width: 16px; height: 16px; }
text { font-family: "Liberation Serif", serif; }
.five { font: bold 12px "Liberation Sans", sans-serif; fill: #f0b020; stroke: #7c5c10; stroke-width: 1px; paint-order: stroke; }
.xx { font-size: 9px; fill: #111; }
.ax { font-size: 11px; fill: #111; }
.ab { font-size: 9px; font-style: italic; font-weight: bold; fill: #111; }
.fx { font-size: 17px; font-style: italic; fill: #555; }
.fx.sm { font-size: 14px; }

.titlebar { display: flex; flex: none; align-items: center; height: 30px; padding-left: 8px; background: #fff; }
.titlebar h1 { flex: 1; margin-left: 5px; }
.winbtns { display: flex; }
.winbtns button { width: 46px; height: 28px; }

.menubar { display: flex; flex: none; align-items: center; height: 24px; color: #474b55; }
.grip {
  flex: none;
  align-self: center;
  width: 2px;
  height: 15px;
  margin: 0 4px;
  background: repeating-linear-gradient(#a4a8b4 0 2px, #e8eaf2 2px 4px);
}
.logo { width: 17px; height: 13px; }
.menus { display: flex; flex: 1; gap: 15px; margin-left: 9px; }
.mdi { display: flex; align-self: flex-end; margin-right: 1px; }
.mdi button { width: 16px; height: 20px; }

.toolrow { display: flex; flex: none; height: 26px; gap: 2px; border-bottom: 1px solid #a5a9b3; background: #cfd3dc; overflow: hidden; }
.bar { display: flex; flex: none; align-items: center; background: linear-gradient(#eaedf8, #d0d4de); }
.bar.last { flex: 1; overflow: hidden; }
.tb { flex: none; width: 22px; height: 22px; border: 1px solid transparent; }
.tb svg, .split svg { width: 16px; height: 16px; overflow: visible; }
.tb.half { width: 11px; }
.tb.half svg { width: 8px; }
.tb.on { border-color: #c4ae84; background: linear-gradient(#fbb766, #fdf0b8); }
.tb.dis svg { opacity: .55; }
.split { flex: none; width: 35px; height: 22px; padding-left: 5px; justify-content: flex-start; }
.split .dd { width: 5px; height: 3px; margin-left: 6px; }
.sep { flex: none; width: 2px; height: 14px; margin: 0 3px; background: linear-gradient(90deg, #a9adb8 50%, #fff 50%); }
.combo { position: relative; flex: none; width: 215px; height: 19px; margin: 0 3px 0 2px; }
.combo select { width: 100%; height: 100%; appearance: none; border: 1px solid #9a9ea8; border-radius: 0; background: #f0f0f0; font: inherit; }
.combo .car { position: absolute; right: 4px; top: 7px; }

.work { display: flex; flex: 1; min-height: 0; margin-top: 1px; }
.dock { display: flex; flex: none; flex-direction: column; width: 277px; margin-right: 5px; padding-left: 1px; }
.cap { display: flex; flex: none; align-items: center; height: 18px; padding: 0 4px 0 3px; background: #b9c0ca; color: #3e424c; }
.cap h2 { flex: 1; }
.cap button { width: 10px; height: 16px; margin-left: 7px; }
.treebox {
  display: grid;
  flex: 1;
  min-height: 0;
  grid-template: minmax(0, 1fr) 15px / minmax(0, 1fr) 16px;
  padding: 4px 3px 3px 2px;
  background: #e9ecf4;
  border-right: 1px solid #85888f;
  border-bottom: 1px solid #666;
}
.tree { margin: 0; padding: 0 0 0 2px; list-style: none; overflow: hidden; background: #fcfcf4; border: solid #85888f; border-width: 1px 0 0 1px; }
.tree li { display: flex; align-items: center; height: 18px; white-space: nowrap; }
.tree .ic { margin: 0 4px 0 2px; }
.tree b { font-size: 12px; }
.tree i, .exp { flex: none; width: 19px; height: 18px; }
.tree i.v { background: repeating-linear-gradient(#777 0 1px, transparent 1px 2px) 9px 0 / 1px 100% no-repeat; }
.tree i.t {
  background:
    repeating-linear-gradient(#777 0 1px, transparent 1px 2px) 9px 0 / 1px 100% no-repeat,
    repeating-linear-gradient(90deg, #777 0 1px, transparent 1px 2px) 10px 9px / 9px 1px no-repeat;
}
.exp {
  --stem: linear-gradient(transparent, transparent);
  background:
    linear-gradient(#24408c, #24408c) 7px 9px / 5px 1px no-repeat,
    var(--stem) 9px 7px / 1px 5px no-repeat,
    linear-gradient(#fff, #fff) 6px 6px / 7px 7px no-repeat,
    linear-gradient(#8a8e98, #8a8e98) 5px 5px / 9px 9px no-repeat,
    repeating-linear-gradient(90deg, #777 0 1px, transparent 1px 2px) 14px 9px / 5px 1px no-repeat,
    repeating-linear-gradient(#777 0 1px, transparent 1px 2px) 9px 0 / 1px 100% no-repeat;
}
.exp.plus { --stem: linear-gradient(#24408c, #24408c); }
.vsb, .hsb { display: flex; background: #f0f0f0; }
.vsb { flex-direction: column; border-top: 1px solid #d8d8d8; }
.vsb button { width: 100%; height: 19px; }
.hsb { grid-column: 1 / 3; border-left: 1px solid #85888f; }
.hsb button { width: 17px; height: 15px; }
.end { margin-top: auto; }
.hsb .end { margin: 0 16px 0 auto; }
.thumb { background: #cdcdcd; }
.vsb .thumb { height: 71px; width: 15px; }
.vsb .thumb.fill { flex: 1; }
.hsb .thumb { width: 110px; height: 15px; }
.docktabs { display: flex; flex: none; align-items: flex-start; height: 23px; gap: 6px; padding-left: 3px; color: #3e424c; }
.docktabs button { height: 22px; gap: 2px; padding: 0 2px; }
.docktabs .cur { background: #f6f7fa; border: 1px solid #fff; border-top: 0; border-radius: 0 0 4px 4px; padding: 0 2px 0 1px; }
.canvas { flex: 1; min-width: 0; background: #fff; border: solid #6c6f76; border-width: 1px 0 0 1px; overflow: hidden; }

.bottom { display: flex; flex: none; flex-direction: column; margin-top: 5px; border-top: 1px solid #fff; background: #f0f0f0; }
.bottom .cap { margin-left: 1px; }
.tabletools { display: flex; flex: none; align-items: center; height: 26px; padding-left: 9px; background: linear-gradient(#eaedf8, #d0d4de); border-bottom: 1px solid #666; }
.sheet { display: flex; padding: 3px 2px 0 3px; font: 11px/13px "Liberation Sans", sans-serif; }
table { flex: 1; width: 0; table-layout: fixed; border-collapse: separate; border-spacing: 0; border: solid #666; border-width: 1px 0 0 1px; }
.w46 { width: 45px; }
.w162 { width: 162px; }
.w54 { width: 54px; }
.w90 { width: 90px; }
.w102 { width: 102px; }
.w78 { width: 78px; }
th, td { padding: 0; height: 16px; line-height: 13px; font-weight: 400; border: solid #a0a0a0; border-width: 0 1px 1px 0; overflow: hidden; white-space: nowrap; }
td { background: #f0f0f0; text-align: left; }
td:nth-child(2) { background: #fff; }
.letters th { height: 14px; line-height: 12px; }
.letters th, tbody th { background: #e1e1e1; border-color: #666; box-shadow: inset 1px 1px #fff, inset -1px -1px #a0a0a0; }
.letters .corner { line-height: 13px; border-bottom-color: #a0a0a0; box-shadow: none; }
.letters .sel, tbody .sel { background: #0078d7; color: #fff; }
.h1 th { border-bottom: 0; padding-bottom: 2px; }
.h2 th { height: 17px; padding-bottom: 2px; }
.ro { color: #7c7c7c; }
sup { font-size: 9px; line-height: 0; vertical-align: 3px; }
.focus { padding-left: 3px; outline: 1px dotted #000; outline-offset: -1px; }
.sheet .vsb { flex: none; width: 17px; border-right: 1px solid #a0a0a0; }
.tabs { display: flex; flex: none; align-items: flex-start; height: 37px; margin-top: 17px; border-top: 1px solid #888; font: 11px/14px "Liberation Sans", sans-serif; }
.tabs > button { height: 18px; padding: 0 3px 0 4px; background: #e1e1e1; border: solid #666; border-width: 0 1px 1px 0; border-radius: 0 0 4px 4px; }
.tabs > .cur { margin-top: -1px; background: #f0f0f0; }
.tabnav { display: flex; flex: none; margin-left: auto; }
.tabnav button { width: 16px; height: 17px; background: #f0f0f0; border: solid #666; border-width: 0 1px 1px 0; box-shadow: inset 1px 1px #fff, inset -1px -1px #b8b8b8; }

.status {
  display: flex;
  flex: none;
  align-items: flex-start;
  height: 20px;
  border-top: 1px solid #a4a8b6;
  background: linear-gradient(#dddfe8, #a9aeb9 50%, #b2b6be 55%, #bcbfc5);
  color: #30343c;
}
.msg { width: 435px; padding: 3px 0 0 4px; }
.modes { display: flex; gap: 3px; padding-top: 1px; font: 11px/15px "Liberation Sans", sans-serif; }
.modes button { height: 18px; padding: 0 2px; border: 1px solid; border-color: #000 #fff #fff #000; }
.modes .off { height: 16px; border-color: #fff #999 #999 #fff; }
.panes { display: flex; flex: 1; justify-content: flex-end; padding: 2px 16px 0 0; }
.panes span { width: 74px; height: 18px; border-left: 1px solid #9a9ea6; }
.panes span:first-child { width: 88px; }
.size { position: absolute; right: 0; bottom: 0; }
```
